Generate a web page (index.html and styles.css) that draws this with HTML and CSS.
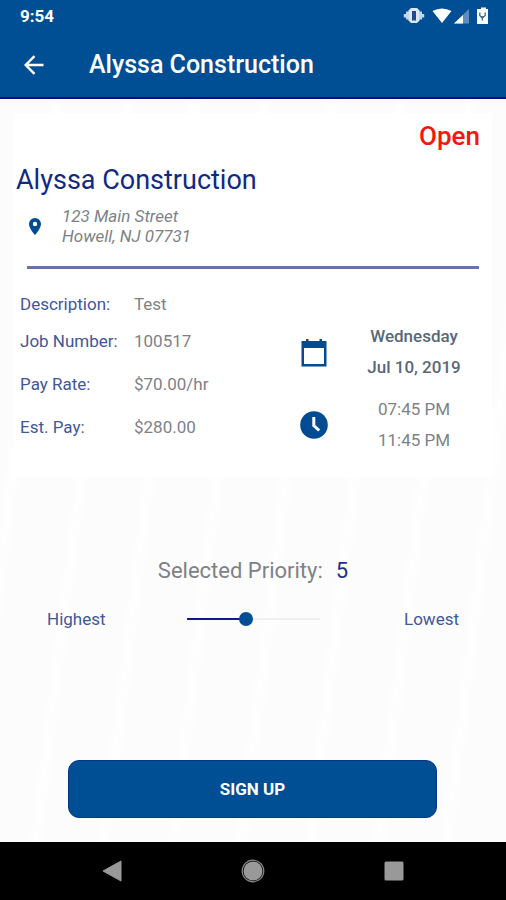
FILE: index.html
```html
<!DOCTYPE html>
<html lang="en">
<head>
<meta charset="utf-8">
<meta name="viewport" content="width=device-width, initial-scale=1">
<title>Alyssa Construction</title>
<link rel="stylesheet" href="styles.css">
</head>
<body>
<header class="top">
  <div class="status">
    <span class="clock">9:54</span>
    <svg class="status-icons" width="86" height="18" viewBox="0 0 86 18" aria-hidden="true">
      <path d="M8 1h6l2.500 2.500v10L14 16H8l-2.500-2.500v-10z" fill="#dbe7f4"/>
      <path d="M3 4.500h3v8H3zM16 4.500h3v8h-3zM0.800 7h2.400v3.500H0.800zM19 7h2.200v3.500H19z" fill="#c4d6ea"/>
      <path d="M9 4h4v9.500H9z" fill="#1d4b96"/>
      <path d="M29.500 4Q39 -1 48.500 4L39 16z" fill="#fff"/>
      <path d="M66 2v14.500H51z" fill="#5d8dbb"/>
      <path d="M60 8v8.500h-9z" fill="#fff"/>
      <path d="M76 2h2V0.500h5V2h2v15H74V2z" fill="#fff"/>
      <path d="M76.800 5.500v3l2 2h1l2.400-2v-3M79.400 9v4.500" fill="none" stroke="#4a6c8a" stroke-width="1.400"/>
    </svg>
  </div>
  <div class="appbar">
    <button class="back" type="button" aria-label="Back">
      <svg width="20" height="20" viewBox="0 0 20 20" aria-hidden="true"><path d="M19.500 10H2M10.500 1.200L1.700 10l8.800 8.800" fill="none" stroke="#fff" stroke-width="2.400"/></svg>
    </button>
    <h1>Alyssa Construction</h1>
  </div>
</header>

<main>
  <section class="card">
    <p class="state">Open</p>
    <h2>Alyssa Construction</h2>
    <div class="place">
      <svg width="12" height="17" viewBox="0 0 12 17" aria-hidden="true"><path fill="#004b91" fill-rule="evenodd" d="M6 0a6 6 0 0 0-6 6c0 4.500 6 11 6 11s6-6.500 6-11a6 6 0 0 0-6-6zm0 3.800a2.200 2.200 0 1 1 0 4.400 2.200 2.200 0 0 1 0-4.400z"/></svg>
      <address>123 Main Street<br>Howell, NJ 07731</address>
    </div>
    <hr>
    <div class="details">
      <dl class="facts">
        <div class="fact first"><dt>Description:</dt><dd>Test</dd></div>
        <div class="fact"><dt>Job Number:</dt><dd>100517</dd></div>
        <div class="fact"><dt>Pay Rate:</dt><dd>$70.00/hr</dd></div>
        <div class="fact"><dt>Est. Pay:</dt><dd>$280.00</dd></div>
      </dl>
      <div class="schedule">
        <svg width="28" height="30" viewBox="0 0 28 30" aria-hidden="true"><path fill="#004b91" fill-rule="evenodd" d="M6 2h2.500v2h11V2H22v2h4.500v25.500h-25V4H6zM4 11v16h20V11z"/></svg>
        <p class="date">Wednesday<br>Jul 10, 2019</p>
        <svg width="28" height="28" viewBox="0 0 28 28" aria-hidden="true"><circle cx="14" cy="14" r="13.800" fill="#004b91"/><path d="M13.800 6v8.600l5.400 4.900" fill="none" stroke="#fff" stroke-width="3"/></svg>
        <p>07:45 PM<br>11:45 PM</p>
      </div>
    </div>
  </section>

  <section class="priority">
    <label class="selected" for="priority">Selected Priority: <output for="priority">5</output></label>
    <div class="scale">
      <span>Highest</span>
      <input id="priority" type="range" min="1" max="10" value="5">
      <span>Lowest</span>
    </div>
  </section>

  <button class="signup" type="button">SIGN UP</button>
</main>

<nav class="system" aria-label="System">
  <button type="button" aria-label="Back"><svg width="24" height="24" viewBox="0 0 24 24"><path d="M21 2v20L3 12z" fill="#999" stroke="#999" stroke-linejoin="round"/></svg></button>
  <button type="button" aria-label="Home"><svg width="24" height="24" viewBox="0 0 24 24"><circle cx="12" cy="12" r="10.800" fill="none" stroke="#888" stroke-width="1.200"/><circle cx="12" cy="12" r="9.500" fill="#999"/></svg></button>
  <button type="button" aria-label="Recent apps"><svg width="24" height="24" viewBox="0 0 24 24"><rect x="2.500" y="2.500" width="19" height="19" rx="1.500" fill="#999"/></svg></button>
</nav>
</body>
</html>
```
FILE: styles.css
```css
* { box-sizing: border-box; }

body {
  margin: 0;
  min-height: 100vh;
  display: flex;
  flex-direction: column;
  font-family: Roboto, "Liberation Sans", sans-serif;
  font-size: 17px;
  color: #7d8288;
  background: #fcfcfc;
}

h1, h2, p, dl, dd { margin: 0; }

button {
  font: inherit;
  border: 0;
  padding: 0;
  background: none;
  cursor: pointer;
}

svg { display: block; }

.top {
  background: #004f94;
  border-bottom: 2px solid #000f80;
  color: #fff;
}

.status {
  height: 32px;
  padding: 0 17px 0 20px;
  display: flex;
  align-items: center;
  justify-content: space-between;
}

.clock { font-weight: 700; }

.appbar {
  height: 65px;
  padding: 0 24px;
  display: flex;
  align-items: center;
  gap: 45px;
}

h1 {
  font-size: 25px;
  font-weight: 500;
}

main {
  flex: 1;
  padding: 14px 14px 24px;
  display: flex;
  flex-direction: column;
  background: repeating-linear-gradient(97deg, #fcfcfc 0 48px, #fefefe 58px, #fcfcfc 68px);
}

.card {
  padding: 7px 0 21px;
  background: #fff;
}

.state {
  padding-right: 12px;
  text-align: right;
  font-size: 26px;
  line-height: 32px;
  font-weight: 500;
  color: #f8150c;
}

h2 {
  margin-top: 10px;
  padding-left: 2px;
  font-size: 27px;
  line-height: 36px;
  font-weight: 400;
  color: #0f2a86;
}

.place {
  margin-top: 8px;
  padding-left: 15px;
  display: flex;
  align-items: center;
  gap: 21px;
}

address { line-height: 20px; }

hr {
  margin: 20px 13px;
  border: 0;
  height: 3px;
  background: #6874a8;
}

.details {
  display: flex;
  justify-content: space-between;
}

.facts { padding-left: 6px; }

.fact {
  height: 43px;
  display: grid;
  grid-template-columns: 114px auto;
  align-items: center;
}

.first { height: 30px; }

dt, .scale { color: #3f579b; }

.schedule {
  margin-top: 32px;
  padding-right: 14px;
  display: grid;
  grid-template-columns: 28px 128px;
  column-gap: 22px;
  row-gap: 11px;
  align-items: center;
  text-align: center;
  line-height: 31px;
}

.date {
  font-weight: 500;
  color: #596878;
}

.priority {
  margin-top: 78px;
  padding: 0 33px;
}

.selected {
  display: flex;
  justify-content: center;
  gap: 13px;
  font-size: 22px;
  line-height: 32px;
}

output { color: #1e3190; }

.scale {
  margin-top: 20px;
  display: grid;
  grid-template-columns: 1fr 133px 1fr;
  align-items: center;
  line-height: 24px;
}

.scale span:last-child { text-align: right; }

input[type="range"] {
  appearance: none;
  margin: 0;
  width: 100%;
  height: 16px;
  background: linear-gradient(90deg, #111b86 45%, #f0f0f0 45%) center / 100% 2px no-repeat;
}

input[type="range"]::-webkit-slider-thumb {
  appearance: none;
  width: 14px;
  height: 14px;
  border-radius: 50%;
  background: #004f94;
}

.signup {
  margin: auto 55px 0 54px;
  height: 58px;
  border: 1px solid #0b3388;
  border-radius: 11px;
  background: #004f94;
  color: #fff;
  font-weight: 700;
}

.system {
  height: 58px;
  padding: 0 42px;
  display: grid;
  grid-template-columns: repeat(3, 1fr);
  place-items: center;
  background: #000;
}
```
